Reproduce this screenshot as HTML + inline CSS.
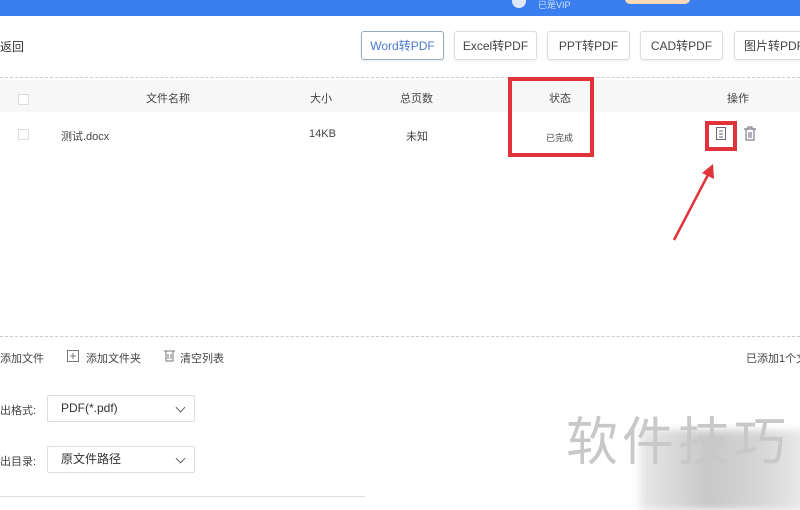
<!DOCTYPE html>
<html><head><meta charset="utf-8"><style>
body{margin:0;width:800px;height:499px;overflow:hidden;background:#fff;font-family:"Liberation Sans","Noto Sans CJK SC",sans-serif;color:#333;position:relative}
.a{position:absolute;white-space:nowrap}
.btn{position:absolute;top:31px;height:29px;width:83px;border:1px solid #ddd;border-radius:3px;font-size:12px;line-height:29px;text-align:center;color:#444;box-sizing:border-box;box-shadow:0 1px 2px rgba(0,0,0,.08)}
.sel{position:absolute;left:47px;width:148px;height:27px;border:1px solid #ddd;border-radius:2px;box-sizing:border-box;font-size:12px;line-height:25px;padding-left:13px;color:#333}
.sel:after{content:"";position:absolute;right:10px;top:8px;width:6px;height:6px;border-right:1px solid #666;border-bottom:1px solid #666;transform:rotate(45deg)}
.f{font-size:11px;color:#444}
</style></head><body>
<div class="a" style="left:0;top:0;width:800px;height:16px;background:#3a7ef0"></div>
<div class="a" style="left:512px;top:-6px;width:14px;height:14px;border-radius:50%;background:#dfe8f8"></div>
<div class="a" style="left:538px;top:-2px;font-size:9px;color:#cfe0ff">已是VIP</div>
<div class="a" style="left:625px;top:-6px;width:65px;height:10px;border-radius:5px;background:#f8d9b8"></div>
<div class="a" style="left:0;top:38px;font-size:12px">返回</div>
<div class="btn" style="left:361px;color:#4a7bd0;border-color:#9ab">Word转PDF</div>
<div class="btn" style="left:454px">Excel转PDF</div>
<div class="btn" style="left:547px">PPT转PDF</div>
<div class="btn" style="left:640px">CAD转PDF</div>
<div class="btn" style="left:734px;width:80px">图片转PDF</div>
<div class="a" style="left:0;top:77px;width:800px;border-top:1px dashed #ccc"></div>
<div class="a" style="left:0;top:80px;width:800px;height:32px;background:#f7f7f7"></div>
<div class="a" style="left:18px;top:94px;width:9px;height:9px;border:1px solid #ddd;background:#fff"></div>
<div class="a f" style="left:146px;top:90px">文件名称</div>
<div class="a f" style="left:310px;top:90px">大小</div>
<div class="a f" style="left:400px;top:90px">总页数</div>
<div class="a f" style="left:549px;top:90px">状态</div>
<div class="a f" style="left:727px;top:90px">操作</div>
<div class="a" style="left:18px;top:129px;width:9px;height:9px;border:1px solid #ddd"></div>
<div class="a f" style="left:61px;top:128px">测试.docx</div>
<div class="a f" style="left:309px;top:128px">14KB</div>
<div class="a f" style="left:406px;top:128px">未知</div>
<div class="a" style="left:546px;top:131px;font-size:9px;color:#444">已完成</div>
<div class="a" style="left:508px;top:77px;width:86px;height:80px;border:4px solid #e0333a;box-sizing:border-box"></div>
<div class="a" style="left:705px;top:121px;width:32px;height:30px;border:4px solid #e0333a;box-sizing:border-box"></div>
<svg class="a" style="left:715px;top:126px" width="12" height="16"><rect x="1.5" y="1.5" width="9" height="12" fill="none" stroke="#667" /><path d="M4 5h4M4 8h4M4 11h4" stroke="#667"/></svg>
<svg class="a" style="left:743px;top:126px" width="14" height="16"><path d="M1 3h12M5 3V1h4v2M3 3v11h8V3M6 6v6M8 6v6" fill="none" stroke="#667"/></svg>
<svg class="a" style="left:660px;top:155px" width="70" height="95"><path d="M14 85L50 16" stroke="#e0333a" stroke-width="2.5"/><path d="M53 9L42 18L54 24Z" fill="#e0333a"/></svg>
<div class="a" style="left:0;top:336px;width:800px;border-top:1px dashed #ccc"></div>
<div class="a f" style="left:0;top:350px">添加文件</div>
<svg class="a" style="left:67px;top:350px" width="12" height="12"><rect x="0.5" y="0.5" width="11" height="11" fill="none" stroke="#777"/><path d="M6 3v6M3 6h6" stroke="#777"/></svg>
<div class="a f" style="left:86px;top:350px">添加文件夹</div>
<svg class="a" style="left:164px;top:349px" width="11" height="13"><path d="M0 2h11M2 2v10h7V2M4 5v5M7 5v5" fill="none" stroke="#777"/></svg>
<div class="a f" style="left:180px;top:350px">清空列表</div>
<div class="a f" style="left:746px;top:350px">已添加1个文</div>
<div class="a f" style="left:0;top:402px">出格式:</div>
<div class="sel" style="top:395px">PDF(*.pdf)</div>
<div class="a f" style="left:0;top:453px">出目录:</div>
<div class="sel" style="top:446px">原文件路径</div>
<div class="a" style="left:0;top:496px;width:365px;border-top:1px solid #ddd"></div>
<div class="a" style="left:640px;top:430px;width:170px;height:80px;background:linear-gradient(90deg,#e8e8e8 0,#c8c8c8 40%,#d5d5d5 70%,#ececec 100%);filter:blur(4px)"></div>
<div class="a" style="left:566px;top:400px;font-size:52px;color:#c8c8c8;letter-spacing:4px">软件技巧</div>
</body></html>
